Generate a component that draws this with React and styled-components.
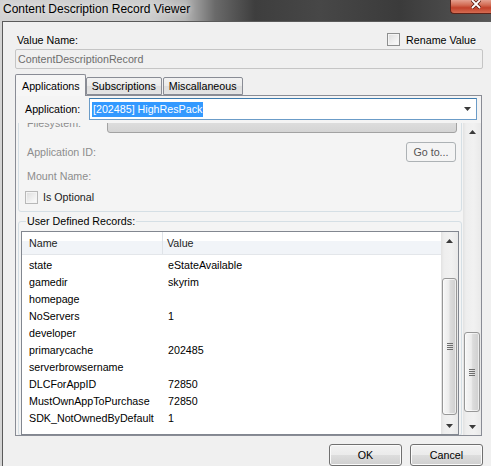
import styled, { createGlobalStyle } from 'styled-components';

const GlobalStyle = createGlobalStyle`
  html, body {
    margin: 0;
    padding: 0;
    background: #f0f0f0;
  }
  body {
    font-family: "Liberation Sans", Arial, sans-serif;
    font-size: 10.7px;
    color: #000;
  }
`;

const records = [
  ['state', 'eStateAvailable'],
  ['gamedir', 'skyrim'],
  ['homepage', ''],
  ['NoServers', '1'],
  ['developer', ''],
  ['primarycache', '202485'],
  ['serverbrowsername', ''],
  ['DLCForAppID', '72850'],
  ['MustOwnAppToPurchase', '72850'],
  ['SDK_NotOwnedByDefault', '1'],
];

const Arrow = ({ down }) => (
  <svg width="7" height="4" viewBox="0 0 7 4">
    <polygon points={down ? '0,0 7,0 3.5,4' : '0,4 7,4 3.5,0'} fill="#3a3a3a" />
  </svg>
);

const ScrollBar = ({ thumbTop, thumbHeight, width }) => (
  <Track $w={width}>
    <ArrowBtn>
      <Arrow />
    </ArrowBtn>
    <ThumbSpace $top={thumbTop}>
      <Thumb $h={thumbHeight}>
        <Grip />
      </Thumb>
    </ThumbSpace>
    <ArrowBtn>
      <Arrow down />
    </ArrowBtn>
  </Track>
);

const CheckBox = ({ dim }) => <Box $dim={dim} />;

const App = () => {
  return (
    <>
      <GlobalStyle />
      <Window>
        <TitleBar>
          <Title>Content Description Record Viewer</Title>
          <CloseBtn>
            <svg width="10" height="9" viewBox="0 0 10 9">
              <path d="M1 0 L9 8 M9 0 L1 8" stroke="#5a1a10" strokeWidth="3.4" />
              <path d="M1 0 L9 8 M9 0 L1 8" stroke="#fff" strokeWidth="1.8" />
            </svg>
          </CloseBtn>
        </TitleBar>
        <Frame>
          <Body>
            <TopRow>
              <span>Value Name:</span>
              <CheckLabel>
                <CheckBox />
                Rename Value
              </CheckLabel>
            </TopRow>
            <ValueBox>ContentDescriptionRecord</ValueBox>

            <TabStrip>
              <Tab $active>Applications</Tab>
              <Tab>Subscriptions</Tab>
              <Tab>Miscallaneous</Tab>
            </TabStrip>

            <TabPanel>
              <AppRow>
                <AppLabel>Application:</AppLabel>
                <Combo>
                  <Selected>[202485] HighResPack</Selected>
                  <Arrow down />
                </Combo>
              </AppRow>

              <Viewport>
                <ScrollContent>
                  <Group>
                    <FieldRow $h={21}>
                      <FieldLabel $dim $w={80}>Filesystem:</FieldLabel>
                      <DisabledBox />
                    </FieldRow>
                    <FieldRow $h={20} $mt={9}>
                      <FieldLabel $dim>Application ID:</FieldLabel>
                      <GoButton>Go to...</GoButton>
                    </FieldRow>
                    <FieldRow $h={20} $mt={4}>
                      <FieldLabel $dim>Mount Name:</FieldLabel>
                    </FieldRow>
                    <FieldRow $h={16} $mt={3}>
                      <OptionalCheck>
                        <CheckBox dim />
                        Is Optional
                      </OptionalCheck>
                    </FieldRow>
                  </Group>

                  <RecordsGroup>
                    <Legend>User Defined Records:</Legend>
                    <ListBox>
                      <ListMain>
                        <Header>
                          <HeadCell $w={141}>Name</HeadCell>
                          <HeadCell>Value</HeadCell>
                        </Header>
                        <Rows>
                          {records.map(([name, value]) => (
                            <Row key={name}>
                              <NameCell>{name}</NameCell>
                              <ValueCell>{value}</ValueCell>
                            </Row>
                          ))}
                        </Rows>
                      </ListMain>
                      <ScrollBar width={17} thumbTop={29} thumbHeight={137} />
                    </ListBox>
                  </RecordsGroup>
                </ScrollContent>
                <ScrollBar width={18} thumbTop={192} thumbHeight={80} />
              </Viewport>
            </TabPanel>

            <ButtonRow>
              <DlgButton>OK</DlgButton>
              <DlgButton>Cancel</DlgButton>
            </ButtonRow>
          </Body>
        </Frame>
      </Window>
    </>
  );
};
export default App;

const Window = styled.div`
  width: 491px;
  height: 466px;
  overflow: hidden;
  display: flex;
  flex-direction: column;
`;

const TitleBar = styled.div`
  height: 21px;
  flex: 0 0 21px;
  display: flex;
  justify-content: space-between;
  align-items: flex-start;
  background: linear-gradient(
    90deg,
    #d2d2d2 0,
    #cdcdcd 150px,
    #b5b5b5 185px,
    #6a6a6a 215px,
    #3e3e3e 255px,
    #474747 320px,
    #3b3b3b 400px,
    #575757 491px
  );
`;

const Title = styled.div`
  padding-left: 3px;
  line-height: 18px;
  font-size: 12px;
  color: #000;
  text-shadow: 0 0 6px rgba(255, 255, 255, 0.9);
`;

const CloseBtn = styled.div`
  width: 41px;
  height: 14px;
  box-sizing: border-box;
  display: flex;
  justify-content: center;
  align-items: flex-start;
  padding: 0 0 0 10px;
  border-left: 1px solid #5e2218;
  border-bottom: 1px solid #5e2218;
  border-bottom-left-radius: 4px;
  background: linear-gradient(#e4a08f 0%, #d26a52 40%, #c2412a 60%, #d46c52 100%);
`;

const Frame = styled.div`
  flex: 1;
  display: flex;
  padding-left: 2px;
  background: #d4d4d4;
`;

const Body = styled.div`
  flex: 1;
  display: flex;
  flex-direction: column;
  padding: 11px 8px 0 12px;
  border-left: 1px solid #5a5a5a;
  border-top: 1px solid #5a5a5a;
  background: #f0f0f0;
  min-width: 0;
`;

const TopRow = styled.div`
  height: 13px;
  display: flex;
  justify-content: space-between;
  align-items: center;
  padding: 0 7px 0 2px;
`;

const CheckLabel = styled.label`
  display: flex;
  align-items: center;
  gap: 6px;
`;

const Box = styled.span`
  display: inline-block;
  width: 13px;
  height: 13px;
  box-sizing: border-box;
  border: 1px solid ${(p) => (p.$dim ? '#b8b8b8' : '#8e8f8f')};
  background: linear-gradient(135deg, #dcdcdc 0%, #f4f4f4 70%, #fbfbfb 100%);
  box-shadow: inset 0 0 0 1px #f4f4f4;
`;

const ValueBox = styled.div`
  margin-top: 3px;
  height: 20px;
  box-sizing: border-box;
  display: flex;
  align-items: center;
  padding-left: 2px;
  border: 1px solid #c5c5c5;
  border-radius: 2px;
  background: #f0f0f0;
  color: #6d6d6d;
`;

const TabStrip = styled.div`
  margin-top: 5px;
  height: 22px;
  display: flex;
  align-items: flex-end;
  margin-bottom: -1px;
  position: relative;
  z-index: 1;
`;

const Tab = styled.div`
  box-sizing: border-box;
  height: ${(p) => (p.$active ? '22px' : '18px')};
  margin-bottom: ${(p) => (p.$active ? '0' : '1px')};
  margin-right: ${(p) => (p.$active ? '0' : '1px')};
  padding: ${(p) => (p.$active ? '0 5px 0 6px' : '0 5px')};
  display: flex;
  align-items: center;
  border: 1px solid #898c95;
  border-bottom: ${(p) => (p.$active ? 'none' : '1px solid #898c95')};
  border-radius: 2px 2px 0 0;
  background: ${(p) =>
    p.$active ? '#f6f6f6' : 'linear-gradient(#f2f2f2 0%, #ebebeb 50%, #dedede 51%, #e4e4e4 100%)'};
`;

const TabPanel = styled.div`
  height: 341px;
  box-sizing: border-box;
  margin-right: 1px;
  display: flex;
  flex-direction: column;
  border: 1px solid #898c95;
  background: #f4f4f4;
`;

const AppRow = styled.div`
  margin-top: 2px;
  height: 22px;
  display: flex;
  align-items: center;
  padding: 0 4px 0 9px;
`;

const AppLabel = styled.span`
  flex: 0 0 64px;
`;

const Combo = styled.div`
  flex: 1;
  height: 22px;
  box-sizing: border-box;
  display: flex;
  align-items: center;
  justify-content: space-between;
  padding: 0 5px 0 2px;
  border: 1px solid #6b9cc8;
  border-top-color: #3d7bad;
  background: #fff;
`;

const Selected = styled.span`
  background: #3399ff;
  color: #fff;
  line-height: 15px;
  padding: 0 1px;
`;

const Viewport = styled.div`
  margin-top: 3px;
  height: 312px;
  display: flex;
  overflow: hidden;
`;

const ScrollContent = styled.div`
  flex: 1;
  min-width: 0;
  margin-top: -23px;
  padding: 0 1px 0 2px;
`;

const Group = styled.div`
  display: flex;
  flex-direction: column;
  padding: 11px 4px 6px 8px;
  border: 1px solid #d5dfe5;
  border-radius: 3px;
`;

const FieldRow = styled.div`
  height: ${(p) => p.$h}px;
  margin-top: ${(p) => p.$mt || 0}px;
  display: flex;
  align-items: center;
  justify-content: space-between;
`;

const FieldLabel = styled.span`
  color: ${(p) => (p.$dim ? '#8d8d8d' : '#000')};
  flex: ${(p) => (p.$w ? `0 0 ${p.$w}px` : '0 0 auto')};
`;

const DisabledBox = styled.div`
  flex: 1;
  height: 21px;
  box-sizing: border-box;
  border: 1px solid #a2a2a2;
  border-radius: 3px;
  background: linear-gradient(#e6e6e6, #d4d4d4);
`;

const GoButton = styled.div`
  width: 50px;
  height: 20px;
  box-sizing: border-box;
  margin-right: 1px;
  display: flex;
  align-items: center;
  justify-content: center;
  border: 1px solid #adb2b5;
  border-radius: 3px;
  background: #f4f4f4;
  color: #555;
`;

const OptionalCheck = styled.label`
  display: flex;
  align-items: center;
  gap: 5px;
  margin-left: -2px;
  color: #222;
`;

const RecordsGroup = styled.fieldset`
  margin: 3px 0 0;
  padding: 3px 2px 0;
  min-width: 0;
  border: 1px solid #d5dfe5;
  border-radius: 3px;
`;

const Legend = styled.legend`
  margin-left: 5px;
  padding: 0 1px;
  line-height: 13px;
  font-size: 10.7px;
`;

const ListBox = styled.div`
  height: 204px;
  box-sizing: border-box;
  display: flex;
  border: 1px solid #828790;
  background: #fff;
`;

const ListMain = styled.div`
  flex: 1;
  min-width: 0;
  display: flex;
  flex-direction: column;
`;

const Header = styled.div`
  height: 23px;
  box-sizing: border-box;
  display: flex;
  border-bottom: 1px solid #e3e6ea;
  background: linear-gradient(#ffffff 0%, #ffffff 40%, #f1f4f8 41%, #f1f4f8 100%);
`;

const HeadCell = styled.div`
  ${(p) => (p.$w ? `flex: 0 0 ${p.$w}px;` : 'flex: 1;')}
  box-sizing: border-box;
  line-height: 22px;
  padding-left: ${(p) => (p.$w ? '7px' : '4px')};
  border-right: ${(p) => (p.$w ? '1px solid #dfe3e8' : 'none')};
  color: #1e1e1e;
`;

const Rows = styled.div`
  padding-top: 2px;
`;

const Row = styled.div`
  height: 17px;
  display: flex;
  line-height: 17px;
`;

const NameCell = styled.div`
  flex: 0 0 141px;
  box-sizing: border-box;
  padding-left: 7px;
`;

const ValueCell = styled.div`
  flex: 1;
  padding-left: 5px;
`;

const Track = styled.div`
  flex: 0 0 ${(p) => p.$w}px;
  display: flex;
  flex-direction: column;
  background: linear-gradient(90deg, #e2e2e2 0, #eeeeee 3px, #f1f1f1 60%, #e9e9e9 100%);
`;

const ArrowBtn = styled.div`
  height: 17px;
  flex: 0 0 17px;
  display: flex;
  align-items: center;
  justify-content: center;
`;

const ThumbSpace = styled.div`
  flex: 1;
  padding-top: ${(p) => p.$top}px;
`;

const Thumb = styled.div`
  height: ${(p) => p.$h}px;
  box-sizing: border-box;
  margin: 0 1px;
  display: flex;
  align-items: center;
  justify-content: center;
  border: 1px solid #979797;
  border-radius: 3px;
  background: linear-gradient(90deg, #f7f7f7 0%, #ececec 45%, #dcdcdc 55%, #cfcfcf 100%);
  box-shadow: inset 0 0 0 1px rgba(255, 255, 255, 0.6);
`;

const Grip = styled.div`
  width: 6px;
  height: 7px;
  background: repeating-linear-gradient(#6e6e6e 0, #6e6e6e 1px, transparent 1px, transparent 2px);
`;

const ButtonRow = styled.div`
  margin-top: 8px;
  display: flex;
  justify-content: flex-end;
  gap: 8px;
`;

const DlgButton = styled.div`
  width: 73px;
  height: 22px;
  box-sizing: border-box;
  display: flex;
  align-items: center;
  justify-content: center;
  border: 1px solid #707070;
  border-radius: 3px;
  background: linear-gradient(#f2f2f2 0%, #ebebeb 50%, #dddddd 51%, #cfcfcf 100%);
  box-shadow: inset 0 0 0 1px #fbfbfb;
`;
